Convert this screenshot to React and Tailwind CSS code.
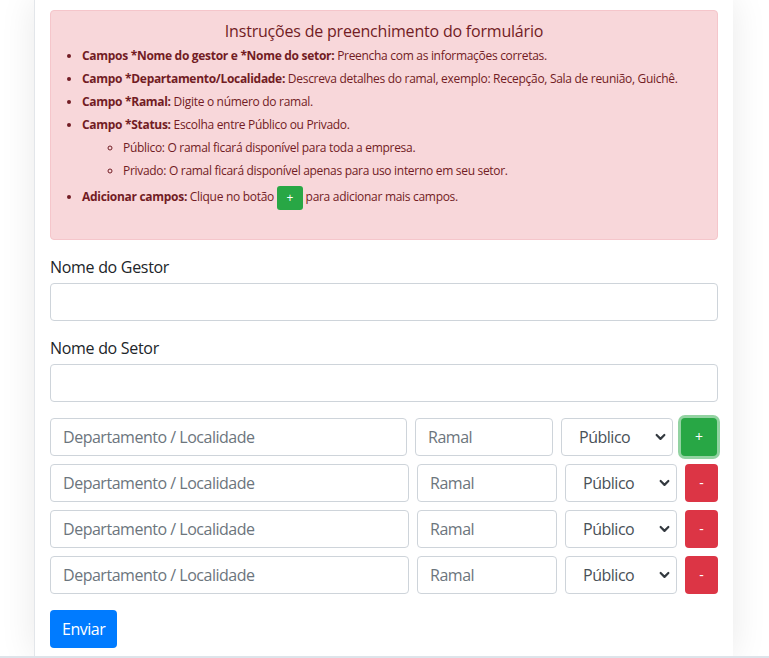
const rows = [
  { first: true },
  { first: false },
  { first: false },
  { first: false },
];

function Chevron() {
  return (
    <svg className="pointer-events-none absolute right-[7px] top-1/2 -translate-y-1/2 w-[11px] h-[11px]" viewBox="0 0 10 10" fill="none">
      <path d="M1.5 3.2L5 6.7l3.5-3.5" stroke="#343a40" strokeWidth="2" strokeLinecap="round" strokeLinejoin="round" />
    </svg>
  );
}

function Row({ first }) {
  return (
    <div className="flex gap-2 h-[38px]">
      <input
        type="text"
        placeholder="Departamento / Localidade"
        className={`${first ? 'w-[357px]' : 'w-[359px]'} h-full border border-[#ced4da] rounded px-3 text-base tracking-[-0.48px] text-[#495057] placeholder:text-[#6c757d] outline-none`}
      />
      <input
        type="text"
        placeholder="Ramal"
        className={`${first ? 'w-[138px]' : 'w-[140px]'} h-full border border-[#ced4da] rounded px-3 text-base tracking-[-0.48px] text-[#495057] placeholder:text-[#6c757d] outline-none`}
      />
      <div className="relative w-[112px] h-full">
        <select className="appearance-none w-full h-full border border-[#ced4da] rounded pl-[17px] pr-6 text-base tracking-[-0.48px] text-[#495057] bg-white outline-none">
          <option>Público</option>
          <option>Privado</option>
        </select>
        <Chevron />
      </div>
      {first ? (
        <button className="w-[36px] h-full rounded bg-[#28a745] text-white text-sm ring-[3px] ring-[#28a745]/50">+</button>
      ) : (
        <button className="w-[33px] h-full rounded bg-[#dc3545] text-white text-sm">-</button>
      )}
    </div>
  );
}

export default function App() {
  return (
    <div className="min-h-[658px] bg-white flex flex-col font-['Open_Sans',sans-serif] text-[#212529]">
      <div className="flex-1 pl-[34px] w-[733px]">
        <div className="bg-white border-l border-[#e3e6ea] shadow-[0_0_34px_rgba(0,0,0,0.09)] pt-[10px] px-[15px] pb-[7px] h-[656px]">
          <div className="bg-[#f8d7da] border border-[#f5c6cb] rounded text-[#721c24] pt-[8px] pb-[13px] px-[11px]">
            <h5 className="text-center text-base tracking-[-0.2px] leading-6 font-medium">Instruções de preenchimento do formulário</h5>
            <ul className="list-disc pl-5 mt-[3px] mb-4 text-xs tracking-[-0.3px]">
              <li className="leading-[19px] mb-1">
                <b>Campos *Nome do gestor e *Nome do setor:</b> Preencha com as informações corretas.
              </li>
              <li className="leading-[19px] mb-1">
                <b>Campo *Departamento/Localidade:</b> Descreva detalhes do ramal, exemplo: Recepção, Sala de reunião, Guichê.
              </li>
              <li className="leading-[19px] mb-1">
                <b>Campo *Ramal:</b> Digite o número do ramal.
              </li>
              <li className="leading-[19px] mb-1">
                <b>Campo *Status:</b> Escolha entre Público ou Privado.
                <ul className="list-[circle] pl-[41px] mt-1">
                  <li className="leading-[19px] mb-1">Público: O ramal ficará disponível para toda a empresa.</li>
                  <li className="leading-[19px]">Privado: O ramal ficará disponível apenas para uso interno em seu setor.</li>
                </ul>
              </li>
              <li className="leading-[19px] mt-[6px]">
                <b>Adicionar campos:</b> Clique no botão{' '}
                <span className="inline-flex items-center justify-center w-[26px] h-6 align-middle rounded-[3px] bg-[#28a745] text-white text-xs">+</span>{' '}
                para adicionar mais campos.
              </li>
            </ul>
          </div>

          <div className="mt-[15px]">
            <label className="block text-base font-medium tracking-[-0.3px] leading-6 mb-1">Nome do Gestor</label>
            <input type="text" className="w-full h-[38px] border border-[#ced4da] rounded px-3 outline-none" />
          </div>
          <div className="mt-[15px]">
            <label className="block text-base font-medium tracking-[-0.3px] leading-6 mb-1">Nome do Setor</label>
            <input type="text" className="w-full h-[38px] border border-[#ced4da] rounded px-3 outline-none" />
          </div>

          <div className="mt-4 flex flex-col gap-2">
            {rows.map((r, i) => (
              <Row key={i} first={r.first} />
            ))}
          </div>

          <button className="mt-4 h-[38px] px-3 rounded bg-[#007bff] text-white text-base tracking-[-0.48px]">Enviar</button>
        </div>
      </div>
      <div className="h-[2px] bg-[#dde4ea]" />
    </div>
  );
}
